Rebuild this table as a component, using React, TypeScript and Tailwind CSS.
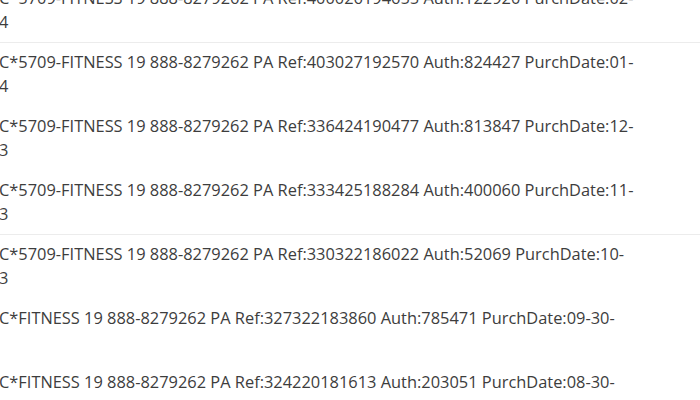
const rows = [
  { text: 'C*5709-FITNESS 19 888-8279262 PA Ref:400026194655 Auth:122920 PurchDate:02-', tail: '4' },
  { text: 'C*5709-FITNESS 19 888-8279262 PA Ref:403027192570 Auth:824427 PurchDate:01-', tail: '4' },
  { text: 'C*5709-FITNESS 19 888-8279262 PA Ref:336424190477 Auth:813847 PurchDate:12-', tail: '3' },
  { text: 'C*5709-FITNESS 19 888-8279262 PA Ref:333425188284 Auth:400060 PurchDate:11-', tail: '3' },
  { text: 'C*5709-FITNESS 19 888-8279262 PA Ref:330322186022 Auth:52069 PurchDate:10-', tail: '3' },
  { text: 'C*FITNESS 19 888-8279262 PA Ref:327322183860 Auth:785471 PurchDate:09-30-', tail: '' },
  { text: 'C*FITNESS 19 888-8279262 PA Ref:324220181613 Auth:203051 PurchDate:08-30-', tail: '' },
]

export default function App() {
  return (
    <div className="h-[400px] w-[700px] overflow-hidden bg-white font-['Open_Sans',sans-serif] text-[16.4px] leading-[24px] text-[#3d3d3d]">
      <div className="-mt-[21px] flex flex-col">
        {rows.map((row, i) => (
          <div
            key={i}
            className={`pt-[7px] pb-[8px] ${i === 0 || i === 3 ? 'border-b border-[#ececec]' : 'border-b border-transparent'}`}
          >
            <div className="-ml-px whitespace-nowrap">{row.text}</div>
            <div className="-ml-px">{row.tail || '\u00a0'}</div>
          </div>
        ))}
      </div>
    </div>
  )
}
